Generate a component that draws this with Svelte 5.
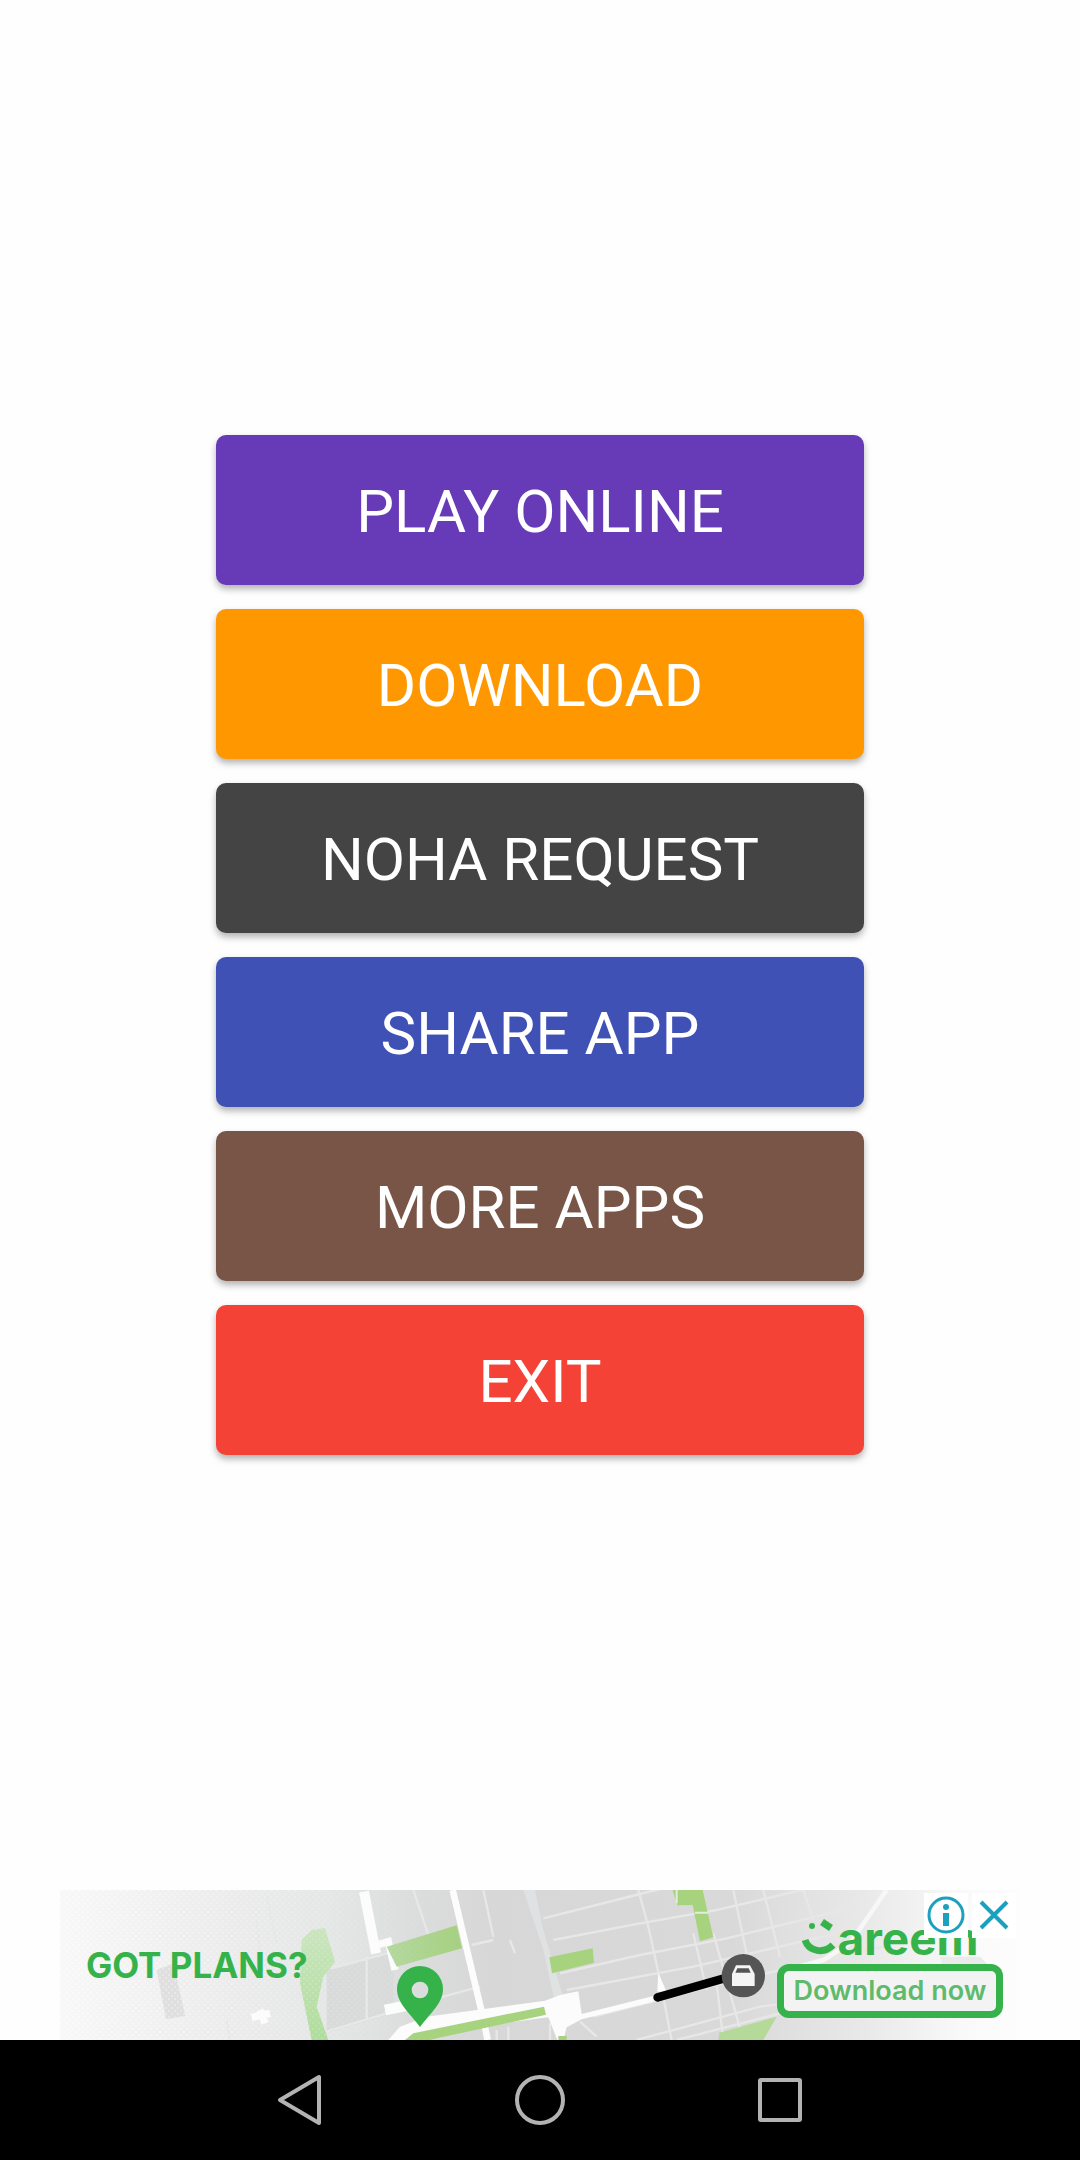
<script>
const items = [
    { label: "Play Online", color: "purple" },
    { label: "Download", color: "orange" },
    { label: "Noha Request", color: "dark" },
    { label: "Share App", color: "blue" },
    { label: "More Apps", color: "brown" },
    { label: "Exit", color: "red" }
];

let adVisible = $state(true);
</script>

<div class="screen">
    <main class="menu">
        {#each items as item}
        <button class={`item ${item.color}`}>{item.label}</button>
        {/each}
    </main>

    {#if adVisible}
    <section class="ad" aria-label="Advertisement">
        <svg class="map" viewBox="0 0 2880 450" preserveAspectRatio="xMidYMid slice" aria-hidden="true">
            <defs>
                <linearGradient id="land" x1="0" y1="0" x2="1" y2="0">
                    <stop offset="0" stop-color="#f8f8f8" />
                    <stop offset="0.14" stop-color="#eeeeee" />
                    <stop offset="0.28" stop-color="#e5e6e6" />
                    <stop offset="0.36" stop-color="#dcdddd" />
                    <stop offset="0.45" stop-color="#d7d7d7" />
                    <stop offset="0.7" stop-color="#d9d9d9" />
                    <stop offset="0.84" stop-color="#e9e9e9" />
                    <stop offset="0.94" stop-color="#f9f9f9" />
                    <stop offset="1" stop-color="#fdfdfd" />
                </linearGradient>
                <linearGradient id="park" x1="0" y1="0" x2="1" y2="0">
                    <stop offset="0" stop-color="#b4d89f" />
                    <stop offset="1" stop-color="#a6d080" />
                </linearGradient>
                <linearGradient id="grove" x1="0" y1="0" x2="0" y2="1">
                    <stop offset="0" stop-color="#cbe5bf" />
                    <stop offset="1" stop-color="#afdd9c" />
                </linearGradient>
                <pattern id="dots" width="18" height="18" patternUnits="userSpaceOnUse">
                    <path d="M0 0h6v6H0zM9 9h6v6H9z" fill="#fff" />
                </pattern>
                <linearGradient id="fade" x1="0" y1="0" x2="1" y2="0">
                    <stop offset="0" stop-color="#fff" />
                    <stop offset="1" stop-color="#000" />
                </linearGradient>
                <mask id="dotmask"><rect width="1150" height="450" fill="url(#fade)" /></mask>
            </defs>
            <rect width="2880" height="450" fill="url(#land)" />

            <!-- blocks -->
            <path d="M290 240L340 220L376 378L318 388Z" fill="#dfdfdf" />
            <path d="M800 240L1000 180V370L800 430Z" fill="#d9dbdb" />
            <path d="M2640 200H2760L2800 240V370H2680Z" fill="#eaeaea" />

            <!-- minor streets -->
            <g fill="none" stroke="#e7e7e7" stroke-width="7">
                <path d="M815 235L1000 185M920 200V390M800 425L980 370M1060 0L1110 150M1270 0L1300 140M1130 325L1260 290M1235 165L1300 150M1350 150L1365 190" />
                <path d="M1450 85L1740 12L1800 -3M1480 150L1740 100L1970 60L2270 -10M1500 250L1740 195L2000 145L2390 50M1520 300L1900 230L2330 130M1600 380L2030 270L2470 170M1730 450L2100 350L2250 330M1850 450L2160 370" />
                <path d="M1735 0L1765 110L1800 270L1835 450M1900 130L1940 300M1960 130L2050 450M2020 0L2070 240M2110 0L2160 200M2230 0L2260 90M2350 0L2390 130M1970 280L1990 450M1560 395L1610 440M1310 420V450M1345 410V450M1470 400V450" />
                <path d="M620 20L650 160M500 390L510 450M590 90L600 190" />
            </g>
            <path d="M1390 0L1450 180L1485 340H1515L1450 120L1425 0Z" fill="#dfe1e2" />
            <path d="M2480 0L2370 160L2290 210L2180 240" fill="none" stroke="#f7f7f7" stroke-width="14" />

            <!-- main roads -->
            <g fill="none" stroke="#fcfcfc">
                <path d="M912 5L948 190" stroke-width="30" />
                <path d="M950 165L985 155L1005 240" stroke-width="22" />
                <path d="M1178 0L1265 365L1283 450" stroke-width="20" />
                <path d="M575 382L630 370M600 360L615 400" stroke-width="22" />
                <path d="M975 360L1050 345" stroke-width="32" />
            </g>
            <path d="M985 450L1020 410L1100 380L1455 332L1500 315L1555 304L1565 372L1780 318V335L1565 388L1520 412L1510 450H1492L1465 382L1130 425L1050 450Z" fill="#fcfcfc" />
            <path d="M1795 250L1820 305H1792Z" fill="#fcfcfc" />

            <!-- parks -->
            <path d="M725 150L755 120L795 114L825 215L790 260L770 350L805 450H755L720 280Z" fill="url(#grove)" />
            <path d="M980 170L1190 106L1206 175L1010 230Z" fill="url(#park)" />
            <path d="M1468 202L1598 175L1602 218L1476 250Z" fill="#a7d37e" />
            <path d="M1035 450L1060 430L1452 350L1458 374L1130 445L1110 450Z" fill="#a7d37e" />
            <path d="M1838 0H1928L1960 142L1920 154L1898 45L1852 46Z" fill="#a7d37e" />
            <path d="M1850 0V40M1905 68H1945" stroke="#e2eed8" stroke-width="6" />
            <path d="M1495 438H1520V450H1495Z" fill="#a7d37e" />
            <path d="M1978 428L2150 380L2110 450H1975Z" fill="#b5d998" />
            <rect width="1150" height="450" fill="url(#dots)" mask="url(#dotmask)" opacity="0.4" />

            <!-- route, car and pin -->
            <path d="M1793 322L1990 266" stroke="#000" stroke-width="26" stroke-linecap="round" />
            <circle cx="2050" cy="257" r="65" fill="#555" />
            <path d="M2028 226H2070L2084 252V288H2016V252Z" fill="#f5f5f5" />
            <path d="M2032 235H2066L2072 248H2026Z" fill="#555" />
            <path fill-rule="evenodd" d="M1080 411C1050 370 1011 340 1011 297A69 69 0 0 1 1149 297C1149 340 1110 370 1080 411ZM1080 275A25 25 0 1 0 1080 325A25 25 0 1 0 1080 275Z" fill="#35b34a" />
        </svg>

        <a class="slogan" href="#careem">GOT PLANS?</a>

        <div class="brand">
            <div class="logo">
                <svg viewBox="0 0 36 40" width="36" height="40" aria-hidden="true">
                    <path d="M4 22C8 34 23 36 32 27" fill="none" stroke="#35b34a" stroke-width="7" />
                    <circle cx="11" cy="8" r="3" fill="#35b34a" />
                    <path d="M21 4L30 10" stroke="#35b34a" stroke-width="7" />
                </svg>
                <span>areem</span>
            </div>
            <button class="cta">Download now</button>
        </div>

        <div class="adchoices">
            <button aria-label="Ad information">
                <svg viewBox="0 0 44 45" width="44" height="45">
                    <circle cx="22" cy="22" r="17" fill="none" stroke="#1ba1bd" stroke-width="3" />
                    <circle cx="22" cy="14" r="3" fill="#1ba1bd" />
                    <path d="M19 20H25V33H19Z" fill="#1ba1bd" />
                </svg>
            </button>
            <button aria-label="Close ad" onclick={() => adVisible = false}>
                <svg viewBox="0 0 44 45" width="44" height="45">
                    <path d="M9 9L35 35M35 9L9 35" stroke="#1ba1bd" stroke-width="4" />
                </svg>
            </button>
        </div>
    </section>
    {/if}

    <nav class="navbar" aria-label="System">
        <button aria-label="Back">
            <svg viewBox="0 0 52 52" width="52" height="52">
                <path d="M45 3V49L6 26Z" />
            </svg>
        </button>
        <button aria-label="Home">
            <svg viewBox="0 0 52 52" width="52" height="52">
                <circle cx="26" cy="26" r="23" />
            </svg>
        </button>
        <button aria-label="Recent apps">
            <svg viewBox="0 0 52 52" width="52" height="52">
                <rect x="6" y="6" width="40" height="40" rx="1" />
            </svg>
        </button>
    </nav>
</div>

<style>
:global(body) {
    margin: 0;
    background: #fefefe;
}

button {
    border: 0;
    padding: 0;
    background: none;
    font-family: inherit;
    cursor: pointer;
}

svg {
    display: block;
}

.screen {
    display: flex;
    flex-direction: column;
    min-height: 100vh;
    font-family: Roboto, sans-serif;
}

.menu {
    flex: 1;
    display: flex;
    flex-direction: column;
    align-items: center;
    justify-content: center;
    gap: 24px;
}

.item {
    width: 60%;
    height: 150px;
    padding-top: 2px;
    border-radius: 10px;
    box-shadow: 0 4px 7px rgba(0, 0, 0, 0.3);
    color: #fff;
    font-size: 60px;
    text-transform: uppercase;
}

.purple {
    background: #673ab7;
}

.orange {
    background: #ff9800;
}

.dark {
    background: #444444;
}

.blue {
    background: #3f51b5;
}

.brown {
    background: #795548;
}

.red {
    background: #f44336;
}

.ad {
    position: relative;
    display: flex;
    align-items: center;
    justify-content: space-between;
    box-sizing: border-box;
    width: 100%;
    max-width: 960px;
    height: 150px;
    margin: 0 auto;
    padding: 0 17px 0 26px;
    overflow: hidden;
    font-family: Inter, sans-serif;
}

.map {
    position: absolute;
    inset: 0;
    width: 100%;
    height: 100%;
}

.slogan {
    position: relative;
    color: #35b34a;
    font-size: 35px;
    font-weight: 700;
    text-decoration: none;
}

.brand {
    position: relative;
    display: flex;
    flex-direction: column;
    align-items: center;
}

.logo {
    display: flex;
    align-items: center;
    height: 52px;
    color: #35b34a;
    font-size: 46px;
    font-weight: 700;
    line-height: 48px;
}

.cta {
    box-sizing: border-box;
    width: 226px;
    height: 54px;
    border: 7px solid #35b34a;
    border-radius: 12px;
    background: #f3f3f3;
    color: #5dbb6b;
    font-size: 27px;
    font-weight: 600;
    line-height: 40px;
    white-space: nowrap;
}

.adchoices {
    position: absolute;
    top: 3px;
    right: 4px;
    display: flex;
    gap: 4px;
}

.adchoices button {
    background: #fff;
}

.navbar {
    display: flex;
    justify-content: center;
    height: 120px;
    background: #000;
}

.navbar button {
    display: flex;
    align-items: center;
    justify-content: center;
    width: 240px;
}

.navbar svg {
    fill: none;
    stroke: #b3b3b3;
    stroke-width: 4;
    stroke-linejoin: round;
}
</style>
